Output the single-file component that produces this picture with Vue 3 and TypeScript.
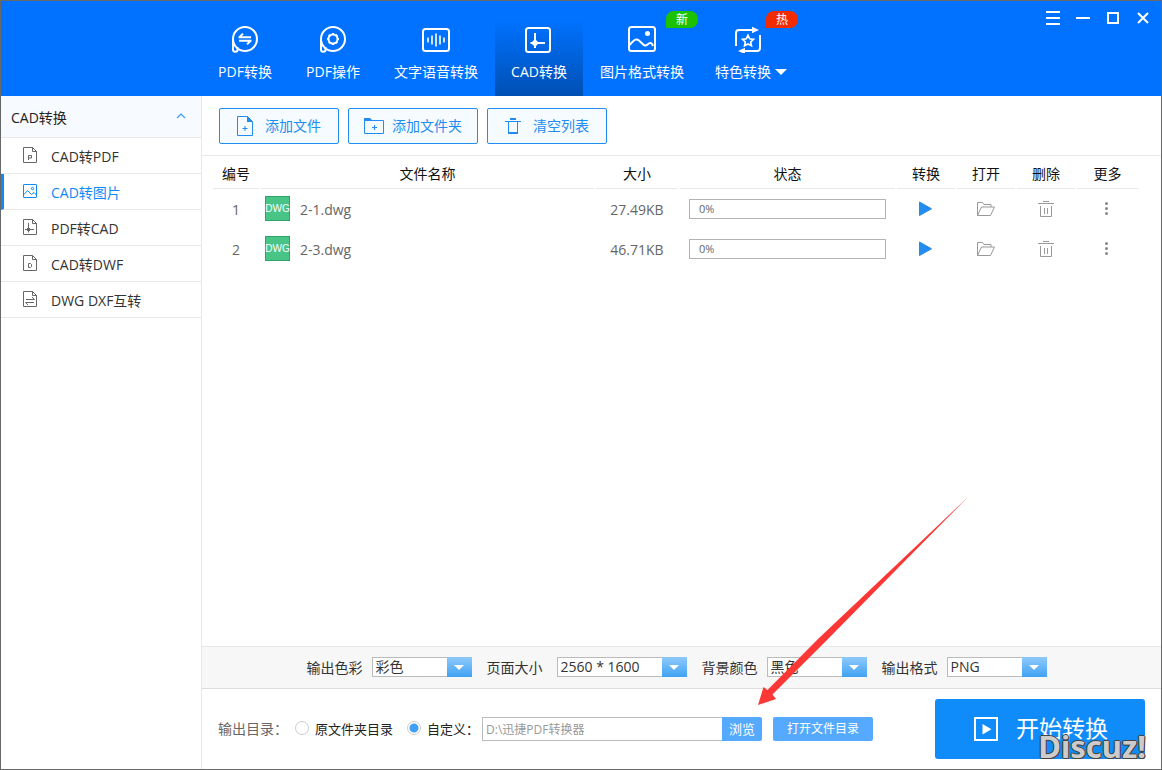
<script setup lang="ts">
import { ref } from 'vue'

interface NavItem {
  id: string
  label: string
  wide?: boolean
  badge?: string
  badgeKind?: string
  dropdown?: boolean
}

interface SelectOption {
  id: string
  label: string
  options: string[]
  wide?: boolean
}

const navItems: NavItem[] = [
  { id: 'pdf', label: 'PDF转换' },
  { id: 'pdfop', label: 'PDF操作' },
  { id: 'voice', label: '文字语音转换', wide: true },
  { id: 'cad', label: 'CAD转换' },
  { id: 'image', label: '图片格式转换', wide: true, badge: '新', badgeKind: 'new' },
  { id: 'special', label: '特色转换', badge: '热', badgeKind: 'hot', dropdown: true },
]
const activeNav = ref('cad')

const sideItems = [
  { id: 'p', label: 'CAD转PDF' },
  { id: 'img', label: 'CAD转图片' },
  { id: 'cad', label: 'PDF转CAD' },
  { id: 'd', label: 'CAD转DWF' },
  { id: 'swap', label: 'DWG DXF互转' },
]
const activeSide = ref('img')

const files = ref([
  { name: '2-1.dwg', size: '27.49KB', progress: 0 },
  { name: '2-3.dwg', size: '46.71KB', progress: 0 },
])

const selects: SelectOption[] = [
  { id: 'color', label: '输出色彩', options: ['彩色', '黑白'] },
  { id: 'size', label: '页面大小', options: ['2560 * 1600', '1920 * 1080'], wide: true },
  { id: 'bg', label: '背景颜色', options: ['黑色', '白色'] },
  { id: 'format', label: '输出格式', options: ['PNG', 'JPG', 'BMP'] },
]

const target = ref('custom')
const outputPath = ref('D:\\迅捷PDF转换器')
</script>

<template>
  <div class="window">
    <header class="topbar">
      <nav class="nav">
        <button
          v-for="item in navItems"
          :key="item.id"
          type="button"
          class="nav-item"
          :class="{ wide: item.wide, active: item.id === activeNav, special: item.dropdown }"
          @click="activeNav = item.id"
        >
          <svg class="nav-icon" viewBox="0 0 28 28" fill="none" stroke="#fff" stroke-width="2">
            <g v-if="item.id === 'pdf' || item.id === 'pdfop'">
              <path d="M2 14V24.5a2.2 2.2 0 0 0 4.6 0V22.2" />
              <circle cx="14" cy="14" r="12" />
              <path v-if="item.id === 'pdf'" d="M7.5 12.2H20M8.4 12.2L12 8.6M20.5 15.8H8M19.6 15.8L16 19.4" />
              <g v-else>
                <circle cx="14" cy="14" r="4.5" />
                <path d="M14 8v2M14 18v2M8 14h2M18 14h2M9.800 9.800l1.400 1.400M16.800 16.800l1.400 1.400M9.800 18.200l1.400-1.400M16.800 11.200l1.400-1.400" stroke-width="2.200" />
              </g>
            </g>
            <g v-else-if="item.id === 'voice'">
              <rect x="1" y="4" width="26" height="22" rx="2.5" />
              <path d="M6 12.5v5M10 10.5v9M14 8.5v13M18 10.5v9M22 12.5v5" stroke-width="1.6" />
            </g>
            <g v-else-if="item.id === 'cad'">
              <rect x="1" y="3" width="24" height="24" rx="2.5" />
              <path d="M10 8v15M5.500 18H20" />
              <path d="M10 14l4 4-4 4-4-4z" fill="#fff" stroke="none" />
            </g>
            <g v-else-if="item.id === 'image'">
              <rect x="1" y="2" width="26" height="24" rx="2.5" />
              <circle cx="19.500" cy="8.500" r="2.500" fill="#fff" stroke="none" />
              <path d="M1.500 20C4 17 6.500 14 9 14.500c3 .6 5.500 5.500 8 6 2.500.3 3-2.700 5.500-2.500 1.500.1 2 1.500 2.500 3" />
            </g>
            <g v-else transform="translate(0 1)">
              <path d="M2 20V7a3 3 0 0 1 3-3h15M26 9v13a3 3 0 0 1-3 3H8" />
              <path d="M18 .8L25 4l-7 3.200zM11 21.800L4 25l7 3z" fill="#fff" stroke="none" />
              <path d="M14 9.300l1.700 3.500 3.800.5-2.800 2.700.7 3.800-3.400-1.800-3.400 1.800.7-3.800-2.800-2.700 3.800-.5z" stroke-width="1.7" />
            </g>
          </svg>
          <span class="nav-label">{{ item.label }}<i v-if="item.dropdown" class="caret"></i></span>
          <span v-if="item.badge" class="badge" :class="item.badgeKind">{{ item.badge }}</span>
        </button>
      </nav>
      <div class="controls">
        <button type="button" aria-label="菜单">
          <svg viewBox="0 0 16 16" stroke="#fff" stroke-width="2"><path d="M1 2h14M1 8h14M1 14h14" /></svg>
        </button>
        <button type="button" aria-label="最小化">
          <svg viewBox="0 0 16 16" stroke="#fff" stroke-width="2"><path d="M1 8h14" /></svg>
        </button>
        <button type="button" aria-label="最大化">
          <svg viewBox="0 0 16 16" stroke="#fff" stroke-width="2" fill="none"><path d="M3 3h10v10H3z" /></svg>
        </button>
        <button type="button" aria-label="关闭">
          <svg viewBox="0 0 16 16" stroke="#fff" stroke-width="2"><path d="M3 3l10 10M13 3L3 13" /></svg>
        </button>
      </div>
    </header>

    <div class="body">
      <aside class="sidebar">
        <button type="button" class="side-head">
          <span>CAD转换</span>
          <svg viewBox="0 0 10 8" fill="none" stroke="#3a9bf5" stroke-width="1.200"><path d="M1 6l4-4 4 4" /></svg>
        </button>
        <button
          v-for="item in sideItems"
          :key="item.id"
          type="button"
          class="side-item"
          :class="{ active: item.id === activeSide }"
          @click="activeSide = item.id"
        >
          <svg class="side-icon" viewBox="0 0 16 18" fill="none" stroke="currentColor">
            <g v-if="item.id === 'img'">
              <rect x="1.500" y="2.500" width="13" height="13" rx=".5" />
              <circle cx="10.500" cy="6.500" r="1.200" />
              <path d="M2 12.500l3.500-4 4 4 2.500-2 2.500 2.500" />
            </g>
            <g v-else>
              <path d="M1.500 1.500h9l4 4v11h-13zM10.500 1.500v4h4" />
              <path v-if="item.id === 'p'" d="M6.500 14V9.500h3v2.500h-3" />
              <path v-else-if="item.id === 'cad'" d="M6.500 5v9.500M3 11.500h9" />
              <path v-else-if="item.id === 'd'" d="M6.500 9.500h2l1 1v2l-1 1h-2z" />
              <path v-else d="M4 9.500h8.500L10 7M12 12.500H3.500L6 15" />
              <rect v-if="item.id === 'cad'" x="5" y="10" width="3" height="3" fill="currentColor" stroke="none" />
            </g>
          </svg>
          <span>{{ item.label }}</span>
        </button>
      </aside>

      <main class="main">
        <div class="toolbar">
          <button type="button" class="tool">
            <svg width="18" height="22" viewBox="0 0 18 22" fill="none" stroke="#228cf0">
              <path d="M1.500 1.500h10l5 5v14h-15z" /><path d="M11 1l6 6h-6z" fill="#228cf0" stroke="none" />
              <path d="M6.500 13.500h5M9 11v5" />
            </svg>
            <span>添加文件</span>
          </button>
          <button type="button" class="tool folder">
            <svg width="20" height="20" viewBox="0 0 20 20" fill="none" stroke="#228cf0">
              <path d="M.5 4.500h19v13H.5z" /><path d="M0 2h6l3 3H0z" fill="#228cf0" stroke="none" />
              <path d="M8 11.500h5M10.500 9v5" />
            </svg>
            <span>添加文件夹</span>
          </button>
          <button type="button" class="tool">
            <svg width="18" height="20" viewBox="0 0 18 20" fill="none" stroke="#228cf0">
              <path d="M1 5.500h16" /><path d="M6 3h6" stroke-width="2" /><path d="M4.500 6v11M13.500 6v11" />
              <path d="M4 17h10" stroke-width="2" />
            </svg>
            <span>清空列表</span>
          </button>
        </div>

        <div class="list">
          <table>
            <thead>
              <tr>
                <th class="c-no">编号</th>
                <th>文件名称</th>
                <th class="c-size">大小</th>
                <th class="c-state">状态</th>
                <th class="c-act">转换</th>
                <th class="c-act">打开</th>
                <th class="c-act">删除</th>
                <th class="c-more">更多</th>
              </tr>
            </thead>
            <tbody>
              <tr v-for="(file, i) in files" :key="file.name">
                <td class="text">{{ i + 1 }}</td>
                <td>
                  <div class="name-cell"><span class="dwg">DWG</span><span class="file-name">{{ file.name }}</span></div>
                </td>
                <td class="text">{{ file.size }}</td>
                <td class="state">
                  <div class="progress" role="progressbar" :aria-valuenow="file.progress">
                    <div class="fill" :style="{ width: file.progress + '%' }"></div>
                    <span>{{ file.progress }}%</span>
                  </div>
                </td>
                <td>
                  <button type="button" class="act" aria-label="转换">
                    <svg viewBox="0 0 20 20"><path d="M3.500 3v13.500l12-6.700z" fill="#228cf0" stroke="#228cf0" stroke-linejoin="round" /></svg>
                  </button>
                </td>
                <td>
                  <button type="button" class="act" aria-label="打开">
                    <svg viewBox="0 0 20 20" fill="none" stroke="#999"><path d="M1.500 16.500v-13h5l1.500 2h7v2.500M1.500 16.500l4-8.500h13l-4 8.500z" /></svg>
                  </button>
                </td>
                <td>
                  <button type="button" class="act" aria-label="删除">
                    <svg viewBox="0 0 20 20" fill="none" stroke="#999"><path d="M2 4.500h16M7 2.500h6M4.500 7v10.500h11V7M8.500 9v6M11.500 9v6" /></svg>
                  </button>
                </td>
                <td>
                  <button type="button" class="act" aria-label="更多">
                    <svg viewBox="0 0 20 20" fill="#888"><circle cx="8.500" cy="4.500" r="1.500" /><circle cx="8.500" cy="9.500" r="1.500" /><circle cx="8.500" cy="14.500" r="1.500" /></svg>
                  </button>
                </td>
              </tr>
            </tbody>
          </table>
        </div>

        <div class="options">
          <div v-for="s in selects" :key="s.id" class="option" :class="{ wide: s.wide }">
            <label :for="s.id">{{ s.label }}</label>
            <span class="select">
              <select :id="s.id">
                <option v-for="o in s.options" :key="o">{{ o }}</option>
              </select>
            </span>
          </div>
        </div>

        <footer class="footer">
          <span class="dir-label">输出目录：</span>
          <label class="radio"><input v-model="target" type="radio" name="target" value="source" />原文件夹目录</label>
          <label class="radio custom"><input v-model="target" type="radio" name="target" value="custom" />自定义：</label>
          <input v-model="outputPath" class="path" type="text" aria-label="输出目录" />
          <button type="button" class="small browse">浏览</button>
          <button type="button" class="small open">打开文件目录</button>
          <button type="button" class="start">
            <svg viewBox="0 0 24 24" fill="none" stroke="#fff" stroke-width="2"><path d="M1 1h22v22H1z" /><path d="M8.500 7v10.500l9-5.200z" fill="#fff" stroke="none" /></svg>
            <span>开始转换</span>
          </button>
        </footer>
      </main>
    </div>

    <svg class="pointer" viewBox="0 0 210 210" fill="#fb3835">
      <path d="M210 0L60 142 9.500 193 5.500 190 0 208l18-6-3.500-4.500L70 142z" />
    </svg>
    <span class="watermark">Discuz!</span>
  </div>
</template>

<style>
body {
  margin: 0;
}
</style>

<style scoped>
.window {
  position: relative;
  box-sizing: border-box;
  min-height: 100vh;
  display: flex;
  flex-direction: column;
  border: 1px solid #686868;
  background: #fff;
  color: #333;
  font: 14px/20px "Open Sans", "Noto Sans CJK SC", sans-serif;
}
button {
  margin: 0;
  padding: 0;
  border: 0;
  background: none;
  color: inherit;
  font: inherit;
  cursor: pointer;
}
svg {
  display: block;
  flex: none;
}
.topbar {
  display: flex;
  justify-content: space-between;
  height: 95px;
  background: #0072ff;
  color: #fff;
}
.nav {
  display: flex;
  padding-left: 200px;
}
.nav-item {
  position: relative;
  display: flex;
  flex-direction: column;
  align-items: center;
  gap: 9px;
  width: 88px;
  padding-top: 24px;
  white-space: nowrap;
}
.nav-item.wide {
  width: 118px;
}
.nav-item.special {
  width: 100px;
}
.nav-item.special .nav-icon {
  margin-right: 6px;
}
.nav-item.active {
  background: linear-gradient(#0072ff 20%, #0050b3);
}
.nav-icon {
  width: 28px;
  height: 28px;
}
.caret {
  display: inline-block;
  margin-left: 4px;
  border: 6px solid transparent;
  border-top-color: #fff;
  border-bottom-width: 0;
  vertical-align: 2px;
}
.badge {
  position: absolute;
  top: 10px;
  left: 83px;
  width: 32px;
  border-radius: 8px 8px 8px 0;
  background: #1cc200;
  font-size: 12px;
  line-height: 17px;
}
.badge.hot {
  left: 65px;
  background: #f22c00;
}
.controls {
  display: flex;
  gap: 14px;
  align-self: flex-start;
  padding: 9px 10px 0 0;
}
.controls svg {
  width: 16px;
  height: 16px;
}
.body {
  flex: 1;
  display: flex;
}
.sidebar {
  width: 200px;
  flex: none;
  border-right: 1px solid #e8e8e8;
}
.side-head {
  display: flex;
  align-items: center;
  justify-content: space-between;
  width: 100%;
  height: 42px;
  padding: 0 15px 0 10px;
  border-bottom: 1px solid #e8e8e8;
  background: #f7faff;
  color: #222;
}
.side-head span,
.side-item span {
  padding-top: 2px;
}
.side-head svg {
  width: 10px;
  height: 8px;
  margin-bottom: 2px;
}
.side-item {
  display: flex;
  align-items: center;
  gap: 13px;
  width: 100%;
  height: 36px;
  padding-left: 21px;
  border-bottom: 1px solid #e8e8e8;
}
.side-item.active {
  padding-left: 18px;
  border-left: 3px solid #1089f8;
  color: #1089f8;
}
.side-icon {
  width: 16px;
  height: 18px;
  margin-bottom: 2px;
  color: #666;
}
.active .side-icon {
  color: #1089f8;
}
.main {
  flex: 1;
  min-width: 0;
  display: flex;
  flex-direction: column;
}
.toolbar {
  display: flex;
  gap: 9px;
  padding: 12px 17px 11px;
  border-bottom: 1px solid #e8e8e8;
}
.tool {
  box-sizing: border-box;
  display: flex;
  align-items: center;
  justify-content: space-between;
  width: 120px;
  height: 36px;
  padding: 0 17px 0 16px;
  border: 1px solid #228cf0;
  border-radius: 2px;
  background: #f6fbff;
  color: #228cf0;
}
.tool.folder {
  width: 130px;
  padding: 0 15px;
}
.list {
  flex: 1;
  padding: 0 21px 0 9px;
}
table {
  width: 100%;
  table-layout: fixed;
  border-collapse: separate;
  border-spacing: 2px 0;
  text-align: center;
  color: #666;
}
th {
  box-sizing: border-box;
  height: 33px;
  padding: 4px 0 0;
  border-bottom: 1px solid #e8e8e8;
  color: #111;
  font-weight: 400;
}
td {
  box-sizing: border-box;
  height: 40px;
  padding: 0;
}
td.text {
  padding-top: 2px;
}
.c-no {
  width: 46px;
}
.c-size {
  width: 82px;
}
.c-state {
  width: 215px;
}
.c-act {
  width: 58px;
}
.c-more {
  width: 61px;
}
.name-cell {
  display: flex;
  align-items: center;
  gap: 10px;
  padding-left: 4px;
}
.file-name {
  padding-top: 2px;
}
.dwg {
  box-sizing: border-box;
  width: 25px;
  height: 25px;
  margin-bottom: 2px;
  border: 1px solid #2fa56b;
  background: #48c487;
  color: #fff;
  font: 10px/23px "Liberation Sans", sans-serif;
  display: flex;
  justify-content: center;
}
td.state {
  padding: 0 9px;
}
.progress {
  position: relative;
  box-sizing: border-box;
  height: 20px;
  border: 1px solid #b3b3b3;
  text-align: left;
  font-size: 11px;
  line-height: 18px;
}
.progress span {
  padding-left: 9px;
}
.fill {
  position: absolute;
  inset: 0 auto 0 0;
  background: #9fd3ff;
}
.act {
  display: block;
  width: 20px;
  margin: 0 auto;
}
.act svg {
  width: 20px;
  height: 20px;
}
.options {
  display: flex;
  justify-content: center;
  gap: 15px;
  padding: 10px 10px 11px 0;
  border-top: 1px solid #e8e8e8;
  border-bottom: 1px solid #ddd;
  background: #f7f7f7;
}
.option {
  display: flex;
  align-items: center;
  gap: 9px;
}
.option.wide {
  gap: 14px;
}
.option label {
  padding-top: 2px;
  line-height: 18px;
}
.select {
  position: relative;
  width: 100px;
}
.wide .select {
  width: 130px;
}
.select select {
  display: block;
  appearance: none;
  box-sizing: border-box;
  width: 100%;
  height: 20px;
  padding: 0 25px 0 3px;
  border: 1px solid #bbb;
  border-radius: 0;
  background: #fff;
  color: #333;
  font: inherit;
  line-height: 18px;
}
.select::before {
  content: "";
  position: absolute;
  inset: 0 0 0 auto;
  width: 25px;
  background: linear-gradient(#8fc9fb, #3fa2f3);
  pointer-events: none;
}
.select::after {
  content: "";
  position: absolute;
  top: 8px;
  right: 8px;
  border: 5px solid transparent;
  border-top-color: #fff;
  border-bottom-width: 0;
  pointer-events: none;
}
.footer {
  display: flex;
  align-items: center;
  height: 80px;
  padding: 0 16px;
}
.footer > * {
  flex: none;
}
.dir-label {
  width: 77px;
  color: #666;
}
.radio {
  display: flex;
  align-items: center;
  gap: 6px;
  margin-right: 14px;
  color: #222;
  font-size: 13px;
}
.radio.custom {
  width: 75px;
  margin-right: 0;
  white-space: nowrap;
}
.radio input {
  appearance: none;
  box-sizing: border-box;
  width: 14px;
  height: 14px;
  margin: 0 0 2px;
  flex: none;
  border: 1px solid #ccc;
  border-radius: 50%;
  background: #fff;
}
.radio input:checked {
  background: radial-gradient(circle, #3fa0f5 0 4px, #fff 5px);
}
.footer .path {
  box-sizing: border-box;
  flex: 0 1 240px;
  min-width: 0;
  height: 24px;
  padding: 0 3px;
  border: 1px solid #bbb;
  border-right: 0;
  background: #fff;
  color: #999;
  font: inherit;
  font-size: 12px;
}
.small {
  height: 24px;
  background: #55aaff;
  color: #fff;
  font-size: 12px;
}
.browse {
  width: 40px;
  border-radius: 0 2px 2px 0;
  font-size: 13px;
}
.open {
  width: 100px;
  margin-left: 11px;
  border-radius: 2px;
}
.start {
  display: flex;
  align-items: center;
  justify-content: center;
  gap: 18px;
  width: 210px;
  height: 60px;
  margin-left: auto;
  padding-left: 2px;
  border-radius: 3px;
  background: #108cfa;
  color: #fff;
  font-size: 23px;
}
.start span {
  padding-bottom: 2px;
}
.start svg {
  width: 24px;
  height: 24px;
}
.pointer {
  position: absolute;
  right: 193px;
  bottom: 62px;
  width: 210px;
  height: 210px;
  pointer-events: none;
}
.watermark {
  position: absolute;
  right: 15px;
  bottom: 8px;
  color: #ccc;
  font: 700 31px/30px "Noto Sans", sans-serif;
  text-shadow: 1px 0 #444, -1px 0 #444, 0 1px #444, 0 -1px #444, 1px 1px #444;
  pointer-events: none;
}
</style>
